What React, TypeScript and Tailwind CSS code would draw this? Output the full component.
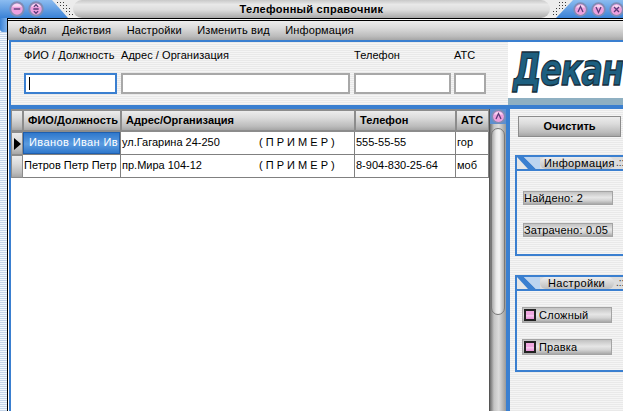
import React from "react";

const stripes = "bg-[repeating-linear-gradient(0deg,#e9e9e9_0px,#e9e9e9_1px,#f5f5f5_1px,#f5f5f5_2px)]";
const metal = "bg-[linear-gradient(180deg,#ececec_0%,#dcdcdc_35%,#bcbcbc_80%,#a6a6a6_100%)]";
const barrel = "bg-[linear-gradient(180deg,#c2c2c2_0%,#e6e6e6_45%,#d4d4d4_70%,#a8a8a8_100%)]";

function Orb({ glyph, size = 15 }: { glyph: string; size?: number }) {
  return (
    <svg width={size} height={size} viewBox="0 0 15 15" className="shrink-0">
      <circle cx="7.5" cy="7.5" r="7.2" fill="#7f8cb4" />
      <circle cx="7.5" cy="7.5" r="5.4" fill="#eda0de" />
      <path d="M3 5.5 A5 5 0 0 1 12 5.5 Z" fill="#f8d8f2" />
      <path
        d={
          glyph === "min" ? "M4.5 7.5H10.5" :
          glyph === "ud" ? "M5.5 5.5L7.5 3.5L9.5 5.5M5 7.5H10M5.5 9.5L7.5 11.5L9.5 9.5" :
          glyph === "up" ? "M5 10L7.5 4.5L10 10" :
          glyph === "down" ? "M5 5L7.5 10.5L10 5" :
          "M5 5L10 10M10 5L5 10"
        }
        stroke="#5a3a78"
        strokeWidth="1.3"
        fill="none"
      />
    </svg>
  );
}

function Dots({ flip }: { flip?: boolean }) {
  const pts = flip
    ? [[9, 2], [12, 2], [15, 2], [9, 5], [12, 5], [15, 5], [6, 8], [9, 8], [12, 8], [3, 11], [6, 11], [3, 14], [6, 14]]
    : [[1, 2], [4, 2], [7, 2], [4, 5], [7, 5], [10, 5], [7, 8], [10, 8], [13, 8], [10, 11], [13, 11], [13, 14], [16, 14]];
  return (
    <svg width="18" height="18" viewBox="0 0 18 18" className="shrink-0">
      {pts.map(([x, y], i) => (
        <rect key={i} x={x} y={y} width="1" height="1" fill="#3a3a3a" />
      ))}
    </svg>
  );
}

function TitleBar() {
  return (
    <div className="h-[18px] shrink-0 flex bg-[#ececec] overflow-hidden">
      <div className="w-[50px] h-full flex items-center gap-[3px] pl-[9px] bg-[linear-gradient(180deg,#8cbcf0,#3a82d6)] shrink-0">
        <Orb glyph="min" size={16} />
        <Orb glyph="ud" size={16} />
      </div>
      <svg width="18" height="18" viewBox="0 0 18 18" className="shrink-0">
        <defs>
          <linearGradient id="tb" x1="0" y1="0" x2="0" y2="1">
            <stop offset="0" stopColor="#8cbcf0" />
            <stop offset="1" stopColor="#3a82d6" />
          </linearGradient>
        </defs>
        <polygon points="0,0 2,0 18,18 0,18" fill="url(#tb)" />
      </svg>
      <div className="w-[5px] shrink-0 relative">
        <div className="absolute right-[-1px] top-0"><Dots /></div>
      </div>
      <div className="flex-1 rounded-full flex items-center justify-center bg-[linear-gradient(180deg,#c8c8c8_0%,#e8e8e8_25%,#dddddd_55%,#a8a8a8_100%)]">
        <span className="font-bold text-[11px] tracking-[0.28px] text-black">Телефонный справочник</span>
      </div>
      <div className="w-[6px] shrink-0 relative">
        <div className="absolute left-0 top-0"><Dots flip /></div>
      </div>
      <svg width="17" height="18" viewBox="0 0 17 18" className="shrink-0">
        <polygon points="17,0 17,18 0,18" fill="url(#tb)" />
      </svg>
      <div className="w-[50px] shrink-0 h-full flex items-center gap-[3px] pl-[-1px] bg-[linear-gradient(180deg,#8cbcf0,#3a82d6)]">
        <Orb glyph="up" />
        <Orb glyph="down" />
        <Orb glyph="x" />
      </div>
    </div>
  );
}

const menu = ["Файл", "Действия", "Настройки", "Изменить вид", "Информация"];

function MenuBar() {
  return (
    <div className={`h-[19px] flex items-center pl-[11px] gap-[15.5px] text-[11px] tracking-[0.12px] text-black ${metal}`}>
      {menu.map((m) => <span key={m}>{m}</span>)}
    </div>
  );
}

function Field({ w, step, label, active }: { w: number; step: number; label: string; active?: boolean }) {
  return (
    <div className="flex flex-col shrink-0" style={{ width: step }}>
      <div className="h-[31px] pt-[7px] text-[11px] whitespace-nowrap leading-[13px] tracking-[0.05px]">{label}</div>
      <div
        className={`h-[21px] bg-white border-2 ${active ? "border-[#3a7fd0]" : "border-[#a8a8a8]"} flex items-center pl-[3px]`}
        style={{ width: w }}
      >
        {active && <div className="w-[1px] h-[13px] bg-black" />}
      </div>
    </div>
  );
}

function SearchBar() {
  return (
    <div className={`h-[67px] shrink-0 flex border-b-[4px] border-[#3a7fd0] ${stripes}`}>
      <div className="flex-1 flex pl-[13px]">
        <Field w={93} step={97} label="ФИО / Должность" active />
        <Field w={229} step={233} label="Адрес / Организация" />
        <Field w={97} step={100} label="Телефон" />
        <Field w={32} step={32} label="АТС" />
      </div>
      <div className="w-[115px] shrink-0 flex flex-col overflow-hidden">
        <div className="h-[56px] bg-white overflow-hidden pl-[5px] flex items-center">
          <span className="font-['DejaVu_Sans'] font-bold italic text-[32px] leading-none tracking-[-1.2px] text-[#1d5f80] [-webkit-text-stroke:1px_#16303e] whitespace-nowrap scale-y-[1.4] origin-center">Декан</span>
        </div>
        <div className="h-[7px] bg-[#8fb0c2]" />
      </div>
    </div>
  );
}

const colTpl = "grid grid-cols-[12px_98px_234px_101px_33px]";

function HeadCell({ children }: { children?: React.ReactNode }) {
  return (
    <div className={`h-[23px] flex items-center pl-[4px] font-bold text-[11px] tracking-[0.03px] border-x border-y-2 border-[#8c8c8c] whitespace-nowrap overflow-hidden ${metal}`}>
      {children}
    </div>
  );
}

function RowHead({ arrow }: { arrow?: boolean }) {
  return (
    <div className={`h-[23px] flex items-center justify-center border border-[#8c8c8c] ${metal}`}>
      {arrow && <div className="w-0 h-0 border-y-[6px] border-y-transparent border-l-[7px] border-l-black" />}
    </div>
  );
}

function Cell({ children, className = "" }: { children?: React.ReactNode; className?: string }) {
  return (
    <div className={`h-[23px] flex items-center pl-[1px] pb-[2px] text-[11px] border-r border-b border-[#808080] whitespace-nowrap overflow-hidden ${className}`}>
      {children}
    </div>
  );
}

function Address({ text }: { text: string }) {
  return (
    <div className="flex w-full">
      <span className="w-[137px] shrink-0">{text}</span>
      <span>( П Р И М Е Р )</span>
    </div>
  );
}

function Table() {
  return (
    <div className="flex-1 bg-white flex flex-col min-w-0">
      <div className={colTpl}>
        <HeadCell />
        <HeadCell>ФИО/Должность</HeadCell>
        <HeadCell>Адрес/Организация</HeadCell>
        <HeadCell>Телефон</HeadCell>
        <HeadCell>АТС</HeadCell>
      </div>
      <div className={colTpl}>
        <RowHead arrow />
        <Cell className="!pl-0 !pb-0">
          <div className="w-full h-full min-w-0 flex items-center pl-[5px] pb-[2px] text-white tracking-[0.4px] border border-[#1f5fae] bg-[linear-gradient(180deg,#2f78cc_0%,#5b9be0_55%,#2f78cc_100%)] overflow-hidden">
            <span className="block overflow-hidden">Иванов Иван Ив</span>
          </div>
        </Cell>
        <Cell><Address text="ул.Гагарина 24-250" /></Cell>
        <Cell>555-55-55</Cell>
        <Cell>гор</Cell>
      </div>
      <div className={colTpl}>
        <RowHead />
        <Cell><span className="block overflow-hidden">Петров Петр Петр</span></Cell>
        <Cell><Address text="пр.Мира 104-12" /></Cell>
        <Cell>8-904-830-25-64</Cell>
        <Cell>моб</Cell>
      </div>
    </div>
  );
}

function ScrollBar() {
  return (
    <div className="w-[17px] shrink-0 flex flex-col bg-[linear-gradient(90deg,#6e6e6e_0%,#c4c4c4_25%,#dcdcdc_55%,#9a9a9a_100%)] border-l border-[#555]">
      <div className="h-[15px] flex items-center justify-center bg-[#5c8fd0]"><Orb glyph="up" /></div>
      <div className="h-[187px] mt-[4px] mx-[1px] rounded-[7px] border border-[#777] bg-[linear-gradient(90deg,#a8a8a8_0%,#e8e8e8_35%,#f4f4f4_60%,#b0b0b0_100%)]" />
    </div>
  );
}

function GroupBox({ title, titlePl, h, children }: { title: string; titlePl: number; h: number; children: React.ReactNode }) {
  return (
    <div className="ml-[5px] border-2 border-r-0 border-[#3a7fd0] flex flex-col" style={{ height: h }}>
      <div className="h-[14px] flex items-center border-b-2 border-[#3a7fd0] shrink-0 bg-[#dcdcdc] overflow-hidden">
        <svg width="23" height="12" viewBox="0 0 23 12" className="shrink-0">
          <rect width="23" height="12" fill="#e6e6e6" />
          <polygon points="0,0 7,0 19,12 11,12" fill="#3a7fd0" />
          <polygon points="7,0 23,0 23,12 19,12" fill="#bcd4f0" />
        </svg>
        <div className="w-[74px] h-full shrink-0 rounded-full bg-[linear-gradient(180deg,#eeeeee,#bdbdbd)] text-[11px] leading-[12px] tracking-[0.35px] whitespace-nowrap" style={{ paddingLeft: titlePl }}>{title}</div>
        <span className="text-[10px] leading-[10px] ml-[2px] text-[#333]">.::</span>
      </div>
      {children}
    </div>
  );
}

function Stat({ text, mt }: { text: string; mt: number }) {
  return (
    <div className={`ml-[6px] w-[90px] h-[14px] border border-[#a4a4a4] flex items-center text-[11px] tracking-[0.2px] shrink-0 ${barrel}`} style={{ marginTop: mt }}>
      {text}
    </div>
  );
}

function Check({ text, mt }: { text: string; mt: number }) {
  return (
    <div className={`ml-[5px] w-[90px] h-[16px] border border-[#a4a4a4] flex items-center gap-[3px] pl-[1px] text-[11px] tracking-[0.2px] shrink-0 ${barrel}`} style={{ marginTop: mt }}>
      <div className="w-[12px] h-[12px] border-2 border-[#222] bg-[linear-gradient(180deg,#f0a8e0_0%,#f0a8e0_45%,#f8d0f0_50%,#e890d8_100%)]" />
      {text}
    </div>
  );
}

function SidePanel() {
  return (
    <div className={`w-[117px] shrink-0 border-l-[4px] border-[#3a7fd0] ${stripes} flex flex-col`}>
      <div className={`mt-[7px] ml-[8px] w-[103px] h-[21px] border border-[#8c8c8c] flex items-center justify-center font-bold text-[11px] ${metal}`}>Очистить</div>
      <div className="mt-[18px]">
        <GroupBox title="Информация" titlePl={4} h={101}>
          <Stat text="Найдено: 2" mt={20} />
          <Stat text="Затрачено: 0.05" mt={18} />
        </GroupBox>
      </div>
      <div className="mt-[19px]">
        <GroupBox title="Настройки" titlePl={8} h={97}>
          <Check text="Сложный" mt={16} />
          <Check text="Правка" mt={16} />
        </GroupBox>
      </div>
    </div>
  );
}

export default function App() {
  return (
    <div className="w-[623px] h-[411px] overflow-hidden flex flex-col bg-white font-['Liberation_Sans',sans-serif] text-black">
      <TitleBar />
      <div className="flex-1 flex min-h-0">
        <div className="w-[8px] shrink-0 border-r border-black flex flex-col">
          <div className="h-[14px] bg-[linear-gradient(90deg,#3a82d6,#7fb2ec)] rounded-bl-[3px]" />
          <div className="flex-1 bg-[repeating-linear-gradient(0deg,#c4d4e8_0px,#c4d4e8_1px,#f4f8fc_1px,#f4f8fc_2px)]" />
        </div>
        <div className="flex-1 min-w-0 flex flex-col">
          <div className="h-[3px] shrink-0 bg-white border-y border-black" />
          <MenuBar />
          <div className="h-[2px] shrink-0 bg-[#3a7fd0] ml-[1px]" />
          <div className="flex-1 min-h-0 flex pl-[1px] bg-white">
            <div className="flex-1 min-h-0 min-w-0 flex flex-col border-l-[2px] border-[#3a7fd0]">
              <SearchBar />
              <div className="flex-1 min-h-0 flex">
                <Table />
                <ScrollBar />
                <SidePanel />
              </div>
            </div>
          </div>
        </div>
      </div>
    </div>
  );
}
